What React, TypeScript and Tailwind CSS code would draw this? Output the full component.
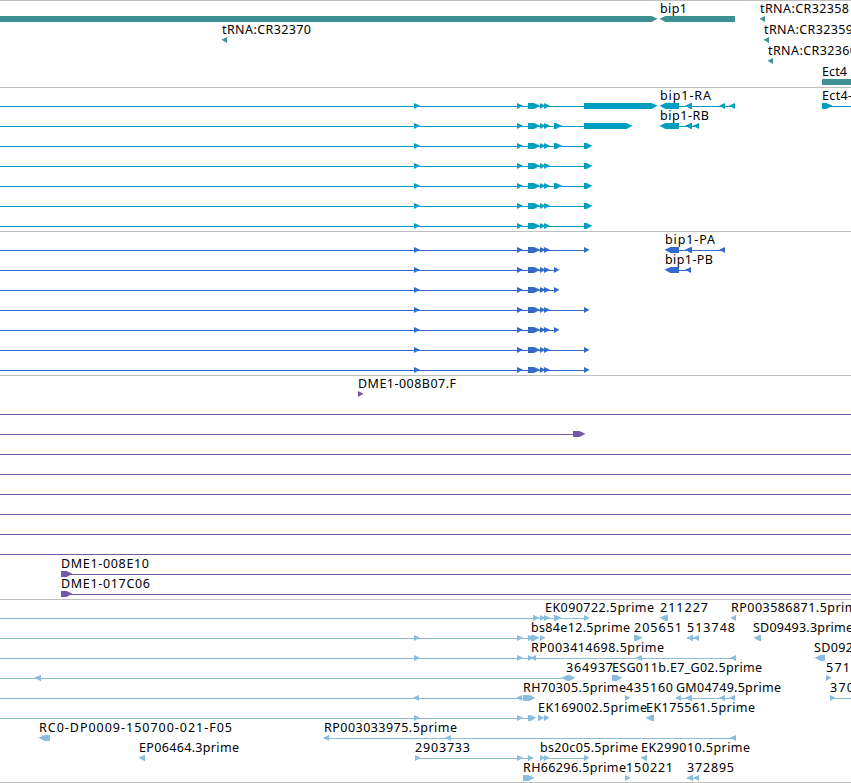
import React from 'react';

type Direction = 'left' | 'right' | 'both';

interface Glyph {
  start: number;
  end: number;
  dir: Direction;
}

interface Label {
  x: number;
  text: string;
  width?: number;
}

interface Row {
  labels?: Label[];
  lines?: [number, number][];
  glyphs?: Glyph[];
}

interface TrackData {
  id: string;
  className: string;
  rowClassName: string;
  rows: Row[];
}

const VIEW_WIDTH = 851;
const TOP = 15;
const BOTTOM = 21;
const MIDDLE = 17.8;

const r = (start: number, end: number): Glyph => ({ start, end, dir: 'right' });
const l = (start: number, end: number): Glyph => ({ start, end, dir: 'left' });
const t = (x: number, text: string, width?: number): Label => ({ x, text, width });

// Exons shared by all the transcripts of the long gene
const exons = [r(414, 420), r(517, 523), r(528, 540), r(540, 545.5), r(544, 550)];

const tracks: TrackData[] = [
  {
    id: 'genes',
    className: 'pb-0.5 text-[#3f9095]',
    rowClassName: 'h-[21px]',
    rows: [
      {
        labels: [t(660, 'bip1', 27), t(760, 'tRNA:CR32358', 89)],
        glyphs: [r(-10, 657.5), l(659.5, 735), l(759.5, 765)],
      },
      {
        labels: [t(222, 'tRNA:CR32370', 89), t(764, 'tRNA:CR32359', 89)],
        glyphs: [l(221.5, 227), l(763.5, 769)],
      },
      { labels: [t(768, 'tRNA:CR32360', 89)], glyphs: [l(767.5, 773)] },
      { labels: [t(822, 'Ect4', 25)], glyphs: [r(822, 870)] },
    ],
  },
  {
    id: 'transcripts',
    className: 'pb-[3px] text-[#009fc1]',
    rowClassName: 'h-5',
    rows: [
      {
        labels: [t(660, 'bip1-RA', 51), t(822, 'Ect4-', 30)],
        lines: [[0, 584], [679, 735], [822, 851]],
        glyphs: [...exons, r(584, 657.5), l(659.5, 679), l(685, 692), l(719, 725), l(729, 735), r(822, 832.5)],
      },
      {
        labels: [t(660, 'bip1-RB', 49)],
        lines: [[0, 584], [679, 699]],
        glyphs: [...exons, r(554, 562), r(584, 632.5), l(659.5, 679), l(685, 692), l(693, 699)],
      },
      { lines: [[0, 584]], glyphs: [...exons, r(554, 562), r(584, 592.5)] },
      { lines: [[0, 584]], glyphs: [...exons, r(584, 592.5)] },
      { lines: [[0, 584]], glyphs: [...exons, r(554, 562), r(584, 592.5)] },
      { lines: [[0, 584]], glyphs: [...exons, r(584, 592.5)] },
      { lines: [[0, 584]], glyphs: [...exons, r(584, 592.5)] },
    ],
  },
  {
    id: 'proteins',
    className: 'pb-[3px] text-[#316bcb]',
    rowClassName: 'h-5',
    rows: [
      {
        labels: [t(665, 'bip1-PA', 50)],
        lines: [[0, 584], [679, 725]],
        glyphs: [...exons, r(584, 589.5), l(664.5, 679), l(685, 692), l(719, 725)],
      },
      {
        labels: [t(665, 'bip1-PB', 48)],
        lines: [[0, 554], [679, 691]],
        glyphs: [...exons, r(554, 559.5), l(664.5, 679), l(685, 691)],
      },
      { lines: [[0, 554]], glyphs: [...exons, r(554, 559.5)] },
      { lines: [[0, 584]], glyphs: [...exons, r(584, 589.5)] },
      { lines: [[0, 554]], glyphs: [...exons, r(554, 559.5)] },
      { lines: [[0, 584]], glyphs: [...exons, r(584, 589.5)] },
      { lines: [[0, 584]], glyphs: [...exons, r(584, 589.5)] },
    ],
  },
  {
    id: 'clones',
    className: 'pb-[3px] text-[#7458a8]',
    rowClassName: 'h-5',
    rows: [
      { labels: [t(358, 'DME1-008B07.F', 98)], glyphs: [r(358, 363.5)] },
      { lines: [[0, 851]] },
      { lines: [[0, 573]], glyphs: [r(573, 585.5)] },
      { lines: [[0, 851]] },
      { lines: [[0, 851]] },
      { lines: [[0, 851]] },
      { lines: [[0, 851]] },
      { lines: [[0, 851]] },
      { lines: [[0, 851]] },
      { labels: [t(61, 'DME1-008E10', 88)], lines: [[61, 851]], glyphs: [r(61, 72.5)] },
      { labels: [t(61, 'DME1-017C06', 89)], lines: [[61, 851]], glyphs: [r(61, 72.5)] },
    ],
  },
  {
    id: 'ests',
    className: 'pb-0.5 text-[#88bddd]',
    rowClassName: 'h-5',
    rows: [
      {
        labels: [t(545, 'EK090722.5prime', 109), t(660, '211227', 48), t(731, 'RP003586871.5prime', 133)],
        lines: [[0, 589]],
        glyphs: [r(533, 539.5), r(540, 545), r(544, 550), r(554, 561.5), r(584, 589.5), l(659.5, 668), l(730.5, 736)],
      },
      {
        labels: [
          t(531, 'bs84e12.5prime', 99),
          t(634, '205651', 48),
          t(687, '513748', 48),
          t(753, 'SD09493.3prime', 100),
        ],
        lines: [[0, 528], [687, 699]],
        glyphs: [
          r(414, 420),
          r(517, 523),
          r(528, 534),
          r(531, 539.5),
          r(540, 545.5),
          r(634, 642.5),
          l(686.5, 693),
          l(693, 699),
          l(753.5, 761),
        ],
      },
      {
        labels: [t(531, 'RP003414698.5prime', 133), t(814, 'SD092', 39)],
        lines: [[0, 735]],
        glyphs: [r(414, 420), r(517, 523), r(528, 533.5), l(530, 536), l(636, 642), l(730, 736), l(814.5, 825)],
      },
      {
        labels: [t(566, '364937', 47), t(612, 'ESG011b.E7_G02.5prime', 150), t(826, '571', 24)],
        lines: [[0, 564]],
        glyphs: [l(34.5, 41), { start: 561.5, end: 575.5, dir: 'both' }, r(612, 622.5), r(826, 831.5)],
      },
      {
        labels: [
          t(523, 'RH70305.5prime', 103),
          t(626, '435160', 47),
          t(676, 'GM04749.5prime', 105),
          t(830, '370', 24),
        ],
        lines: [[0, 523], [676, 735], [830, 851]],
        glyphs: [
          l(413, 419),
          l(516, 522),
          r(523, 535.5),
          r(625, 630.5),
          l(675.5, 681),
          l(685, 692),
          l(719, 725),
          l(729, 735),
          r(830, 835.5),
        ],
      },
      {
        labels: [t(538, 'EK169002.5prime', 109), t(646, 'EK175561.5prime', 109)],
        lines: [[0, 533]],
        glyphs: [r(414, 420), r(517, 523), r(528, 536.5), r(538, 544.5), r(544, 549.5), l(645.5, 654)],
      },
      {
        labels: [t(39, 'RC0-DP0009-150700-021-F05', 193), t(324, 'RP003033975.5prime', 133)],
        lines: [[324, 735]],
        glyphs: [l(38.5, 50), l(323, 329), l(445, 451), l(730, 736)],
      },
      {
        labels: [
          t(139, 'EP06464.3prime', 100),
          t(415, '2903733', 55),
          t(540, 'bs20c05.5prime', 98),
          t(641, 'EK299010.5prime', 109),
        ],
        lines: [[415, 533], [540, 584]],
        glyphs: [l(138.5, 145), r(415, 420.5), r(517, 523), r(528, 533.5), r(540, 545), r(544, 549.5), r(584, 589.5), l(640.5, 647)],
      },
      {
        labels: [t(523, 'RH66296.5prime', 103), t(626, '150221', 47), t(687, '372895', 47)],
        lines: [[687, 699]],
        glyphs: [r(523, 534.5), r(625, 630.5), l(686.5, 693), l(693, 699)],
      },
    ],
  },
];

const glyphPoints = ({ start, end, dir }: Glyph) => {
  const head = Math.min(6, end - start);
  const pointsLeft = dir === 'left' || dir === 'both';
  const pointsRight = dir === 'right' || dir === 'both';
  const bodyStart = pointsLeft ? start + head : start;
  const bodyEnd = pointsRight ? end - head : end;

  const points = [`${bodyStart},${TOP}`, `${bodyEnd},${TOP}`];
  if (pointsRight) points.push(`${end},${MIDDLE}`);
  points.push(`${bodyEnd},${BOTTOM}`, `${bodyStart},${BOTTOM}`);
  if (pointsLeft) points.push(`${start},${MIDDLE}`);
  return points.join(' ');
};

const TrackRow = ({ row, className }: { row: Row; className: string }) => (
  <svg className={`block shrink-0 overflow-visible ${className}`} width={VIEW_WIDTH}>
    {row.lines?.map(([start, end]) => (
      <rect key={start} x={start} y={18} width={end - start} height={1} fill="currentColor" />
    ))}
    {row.glyphs?.map((glyph) => (
      <polygon key={glyph.start} points={glyphPoints(glyph)} fill="currentColor" />
    ))}
    {row.labels?.map((label) => (
      <text
        key={label.text}
        x={label.x}
        y={12}
        textLength={label.width}
        className="fill-black font-['Noto_Sans','DejaVu_Sans',sans-serif] text-[12.5px]"
      >
        {label.text}
      </text>
    ))}
  </svg>
);

const Track = ({ track }: { track: TrackData }) => (
  <section className={`flex flex-col border-t border-[#bfbfbf] ${track.className}`}>
    {track.rows.map((row, index) => (
      <TrackRow key={index} row={row} className={track.rowClassName} />
    ))}
  </section>
);

export default function App() {
  return (
    <main className="flex h-[783px] w-[851px] flex-col overflow-hidden border-b border-[#bfbfbf] bg-white">
      {tracks.map((track) => (
        <Track key={track.id} track={track} />
      ))}
    </main>
  );
}
